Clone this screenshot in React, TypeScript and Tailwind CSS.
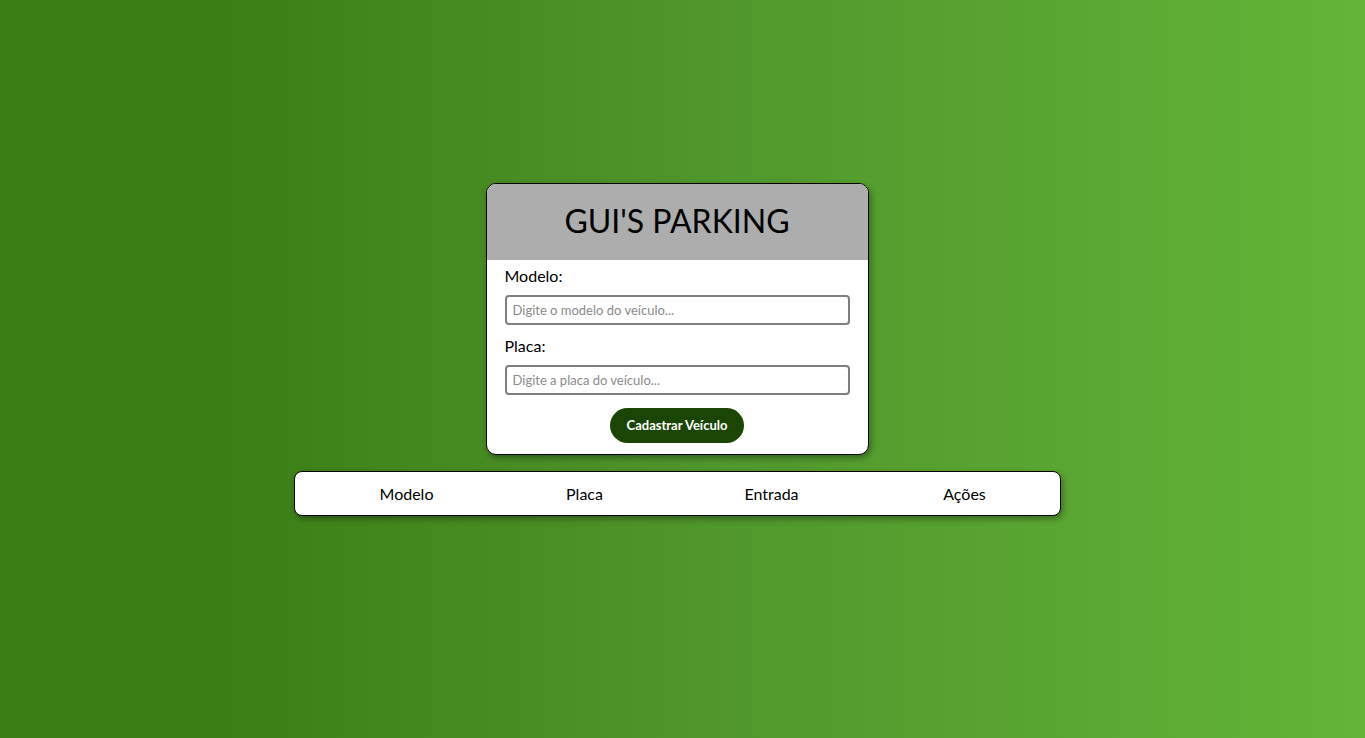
import React from "react";

export default function App() {
  const font = { fontFamily: "Lato, 'Noto Sans', sans-serif" };
  return (
    <div
      className="min-h-[738px] w-full flex flex-col items-center pt-[183px] pr-[11px] bg-[linear-gradient(to_right,#3a7d15_15%,#4f952c_50%,#63b437_100%)]"
      style={font}
    >
      <div className="w-[383px] rounded-[10px] border border-black bg-white overflow-hidden shadow-[2px_3px_6px_rgba(0,0,0,0.35)]">
        <div className="h-[76px] bg-[#adadad] flex items-center justify-center">
          <h1 className="text-[32px] leading-[40px] -mt-[2px] text-black">GUI'S PARKING</h1>
        </div>
        <div className="px-[18px] pt-[4px] pb-[11px] flex flex-col">
          <label className="text-[16px] leading-[24px] text-black">Modelo:</label>
          <input
            className="mt-[7px] h-[30px] w-full rounded-[4px] border-2 border-[#7f7f7f] px-[6px] text-[13px] outline-none placeholder:text-[#8a8a8a]"
            placeholder="Digite o modelo do veículo..."
          />
          <label className="mt-[9px] text-[16px] leading-[24px] text-black">Placa:</label>
          <input
            className="mt-[7px] h-[30px] w-full rounded-[4px] border-2 border-[#7f7f7f] px-[6px] text-[13px] outline-none placeholder:text-[#8a8a8a]"
            placeholder="Digite a placa do veículo..."
          />
          <div className="mt-[13px] flex justify-center">
            <button className="h-[35px] w-[134px] rounded-full bg-[#1b4505] text-white text-[13px] font-bold">
              Cadastrar Veículo
            </button>
          </div>
        </div>
      </div>
      <div className="mt-[16px] w-[767px] h-[45px] rounded-[8px] border border-black bg-white shadow-[2px_3px_6px_rgba(0,0,0,0.35)] flex items-center pl-[23px]">
        <div className="w-[178px] text-center text-[16px] text-black">Modelo</div>
        <div className="w-[178px] text-center text-[16px] text-black">Placa</div>
        <div className="w-[196px] text-center text-[16px] text-black">Entrada</div>
        <div className="w-[190px] text-center text-[16px] text-black">Ações</div>
      </div>
    </div>
  );
}
